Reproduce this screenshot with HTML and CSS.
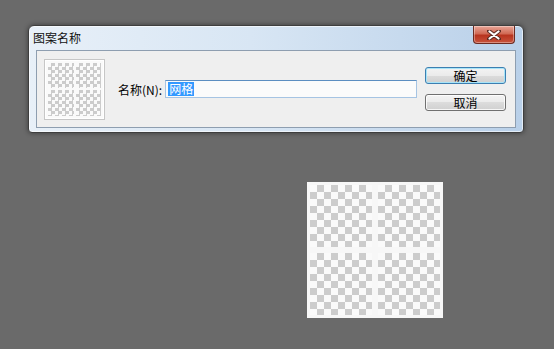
FILE: index.html
```html
<!DOCTYPE html>
<html lang="zh-CN">
<head>
    <meta charset="UTF-8" />
    <title>图案名称</title>
    <link rel="stylesheet" href="styles.css">
</head>
<body>

<div class="canvas">

    <!-- Pattern name dialog -->
    <div class="window">
        <div class="titlebar">
            <span class="title">图案名称</span>
            <button class="close">
                <svg width="14" height="10" viewBox="0 0 14 10">
                    <path d="M2 1 L12 9 M12 1 L2 9" stroke="#5a2a22" stroke-width="4" stroke-linecap="round"/>
                    <path d="M2.5 1.5 L11.5 8.5 M11.5 1.5 L2.5 8.5" stroke="#fff" stroke-width="2.2" stroke-linecap="round"/>
                </svg>
            </button>
        </div>

        <div class="panel">
            <div class="preview">
                <div class="tile small"></div>
                <div class="tile small"></div>
                <div class="tile small"></div>
                <div class="tile small"></div>
            </div>

            <div class="field">
                <label class="label">名称(N):</label>
                <div class="input"><span class="selected">网格</span></div>
            </div>

            <div class="buttons">
                <button class="btn default">确定</button>
                <button class="btn">取消</button>
            </div>
        </div>
    </div>

    <!-- Pattern drawn on the canvas -->
    <div class="pattern">
        <div class="tile big"></div>
        <div class="tile big"></div>
        <div class="tile big"></div>
        <div class="tile big"></div>
    </div>

</div>

</body>
</html>
```

FILE: styles.css
```css
* {
  box-sizing: border-box;
  margin: 0;
  padding: 0;
}

body {
  background: #6a6a6a;
  font-family: "Liberation Sans", "Noto Sans CJK SC", sans-serif;
  font-size: 12px;
  color: #000;
  width: 554px;
  height: 349px;
  overflow: hidden;
}

.canvas {
  padding: 25px 0 0 28px;
}

.window {
  width: 496px;
  height: 108px;
  border: 1px solid #3e3e3e;
  border-radius: 6px 6px 4px 4px;
  background: linear-gradient(to right, #e8f0f8, #d8e6f4 45%, #b9d0e9);
  box-shadow: 0 0 5px rgba(0,0,0,0.45), inset 0 0 0 1px rgba(255,255,255,0.6);
  display: flex;
  flex-direction: column;
}

.titlebar {
  height: 24px;
  display: flex;
  justify-content: space-between;
  align-items: flex-start;
  padding: 0 8px 0 4px;
}

.title {
  font-family: "Noto Sans CJK SC", sans-serif;
  font-size: 12px;
  line-height: 12px;
  margin-top: 6px;
  color: #111;
}

.close {
  width: 42px;
  height: 18px;
  border: 1px solid #6b2b22;
  border-top: none;
  border-radius: 0 0 4px 4px;
  background: linear-gradient(#e8a597, #d16a55 45%, #b8341f 55%, #c8533c);
  display: flex;
  align-items: center;
  justify-content: center;
  box-shadow: inset 0 0 0 1px rgba(255,255,255,0.35);
}

.panel {
  flex: 1;
  margin: 0 7px 4px 7px;
  border: 1px solid #8e9eb0;
  background: #efefef;
  display: flex;
  align-items: center;
  padding: 0 9px 0 7px;
}

.preview {
  width: 61px;
  height: 61px;
  border: 1px solid #c6c6c6;
  background: #fafafa;
  padding: 2px;
  display: grid;
  grid-template-columns: 1fr 1fr;
  box-shadow: inset 0 0 0 1px #fff;
}

.tile {
  background-color: #fafafa;
  background-image: conic-gradient(#cccccc 25%, #fafafa 0 50%, #cccccc 0 75%, #fafafa 0);
  background-clip: content-box;
}

.tile.small {
  padding: 1px;
  background-size: 7px 7px;
  background-origin: content-box;
}

.field {
  display: flex;
  align-items: center;
  margin-left: 13px;
}

.label {
  font-family: "Noto Sans CJK SC", sans-serif;
  font-size: 12px;
  margin-right: 3px;
}

.input {
  width: 252px;
  height: 18px;
  background: #fbfbfb;
  border: 1px solid #a6c4e3;
  border-top-color: #5c8ec1;
  padding: 1px 2px;
  display: flex;
  align-items: center;
}

.selected {
  background: #3399ff;
  color: #fff;
  font-family: "Noto Sans CJK SC", sans-serif;
  font-size: 12px;
  line-height: 14px;
  padding: 0 1px;
}

.buttons {
  margin-left: auto;
  display: flex;
  flex-direction: column;
  gap: 10px;
}

.btn {
  width: 81px;
  height: 17px;
  border: 1px solid #707070;
  border-radius: 3px;
  background: linear-gradient(#f3f3f3, #ebebeb 50%, #dcdcdc 50%, #d0d0d0);
  font-family: "Noto Sans CJK SC", sans-serif;
  font-size: 12px;
  line-height: 14px;
  color: #000;
  box-shadow: inset 0 0 0 1px rgba(255,255,255,0.8);
}

.btn.default {
  border-color: #3c7fb1;
  box-shadow: inset 0 0 0 1px #a8e4f8;
}

.pattern {
  width: 136px;
  height: 136px;
  margin: 49px 0 0 279px;
  display: grid;
  grid-template-columns: 1fr 1fr;
  background: #f7f7f7;
}

.tile.big {
  padding: 3px;
  background-size: 14px 14px;
  background-origin: content-box;
}
```
